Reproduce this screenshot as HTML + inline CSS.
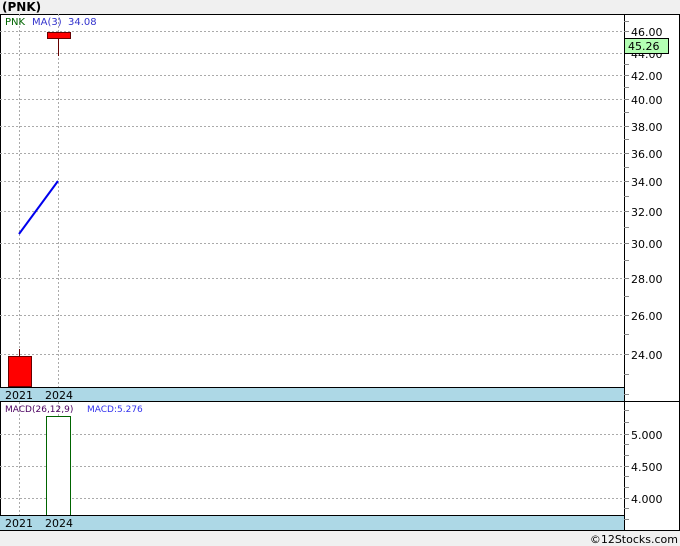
<!DOCTYPE html>
<html><head><meta charset="utf-8"><style>
html,body{margin:0;padding:0;background:#f0f0f0;}
svg{display:block;font-family:"DejaVu Sans",Verdana,sans-serif;}
</style></head><body>
<svg width="680" height="546" viewBox="0 0 680 546" xmlns="http://www.w3.org/2000/svg">
<rect x="0" y="0" width="680" height="546" fill="#f0f0f0"/>
<text x="2" y="11" font-size="12" font-weight="bold" fill="#000">(PNK)</text>
<rect x="0" y="14" width="680" height="516" fill="#fff"/>
<line x1="0" y1="14.5" x2="680" y2="14.5" stroke="#000"/>
<line x1="0.5" y1="14" x2="0.5" y2="530" stroke="#000"/>
<line x1="679.5" y1="14" x2="679.5" y2="530" stroke="#000"/>
<g stroke="#aaa" stroke-dasharray="2,2" stroke-width="1">
<line x1="0" y1="31.5" x2="624" y2="31.5"/>
<line x1="0" y1="53.5" x2="624" y2="53.5"/>
<line x1="0" y1="75.5" x2="624" y2="75.5"/>
<line x1="0" y1="99.5" x2="624" y2="99.5"/>
<line x1="0" y1="126.5" x2="624" y2="126.5"/>
<line x1="0" y1="153.5" x2="624" y2="153.5"/>
<line x1="0" y1="181.5" x2="624" y2="181.5"/>
<line x1="0" y1="211.5" x2="624" y2="211.5"/>
<line x1="0" y1="243.5" x2="624" y2="243.5"/>
<line x1="0" y1="278.5" x2="624" y2="278.5"/>
<line x1="0" y1="315.5" x2="624" y2="315.5"/>
<line x1="0" y1="354.5" x2="624" y2="354.5"/>
<line x1="19.5" y1="14" x2="19.5" y2="387"/>
<line x1="58.5" y1="14" x2="58.5" y2="387"/>
<line x1="0" y1="434.5" x2="624" y2="434.5"/>
<line x1="0" y1="466.5" x2="624" y2="466.5"/>
<line x1="0" y1="498.5" x2="624" y2="498.5"/>
<line x1="19.5" y1="402" x2="19.5" y2="515"/>
<line x1="58.5" y1="402" x2="58.5" y2="515"/>
</g>
<text x="5" y="25" font-size="10" fill="#006400">PNK</text>
<text x="32" y="25" font-size="10" fill="#3333cc">MA(3)</text>
<text x="68" y="25" font-size="10" fill="#3333cc">34.08</text>
<line x1="19.5" y1="349" x2="19.5" y2="357" stroke="#600"/>
<rect x="8.5" y="356.5" width="23" height="30" fill="#f00" stroke="#600"/>
<line x1="58.5" y1="38" x2="58.5" y2="56" stroke="#600"/>
<rect x="47.5" y="32.5" width="23" height="6" fill="#f00" stroke="#600"/>
<line x1="19" y1="234" x2="58" y2="181" stroke="#0000ee" stroke-width="2"/>
<rect x="0" y="387" width="624" height="14" fill="#add8e6"/>
<line x1="0" y1="387.5" x2="624" y2="387.5" stroke="#000"/>
<line x1="0" y1="401.5" x2="680" y2="401.5" stroke="#000"/>
<text x="5" y="399" font-size="11" fill="#000">2021</text>
<text x="45" y="399" font-size="11" fill="#000">2024</text>
<line x1="624.5" y1="14" x2="624.5" y2="530" stroke="#000"/>
<g stroke="#888">
<line x1="624" y1="31.5" x2="629" y2="31.5"/><line x1="624" y1="53.5" x2="629" y2="53.5"/><line x1="624" y1="75.5" x2="629" y2="75.5"/><line x1="624" y1="99.5" x2="629" y2="99.5"/><line x1="624" y1="126.5" x2="629" y2="126.5"/><line x1="624" y1="153.5" x2="629" y2="153.5"/><line x1="624" y1="181.5" x2="629" y2="181.5"/><line x1="624" y1="211.5" x2="629" y2="211.5"/><line x1="624" y1="243.5" x2="629" y2="243.5"/><line x1="624" y1="278.5" x2="629" y2="278.5"/><line x1="624" y1="315.5" x2="629" y2="315.5"/><line x1="624" y1="354.5" x2="629" y2="354.5"/>
<line x1="624" y1="21.5" x2="629" y2="21.5"/><line x1="624" y1="42.5" x2="629" y2="42.5"/><line x1="624" y1="64.5" x2="629" y2="64.5"/><line x1="624" y1="87.5" x2="629" y2="87.5"/><line x1="624" y1="112.5" x2="629" y2="112.5"/><line x1="624" y1="139.5" x2="629" y2="139.5"/><line x1="624" y1="167.5" x2="629" y2="167.5"/><line x1="624" y1="196.5" x2="629" y2="196.5"/><line x1="624" y1="227.5" x2="629" y2="227.5"/><line x1="624" y1="260.5" x2="629" y2="260.5"/><line x1="624" y1="296.5" x2="629" y2="296.5"/><line x1="624" y1="334.5" x2="629" y2="334.5"/><line x1="624" y1="374.5" x2="629" y2="374.5"/><line x1="624" y1="394.5" x2="629" y2="394.5"/>
<line x1="624" y1="410.5" x2="629" y2="410.5"/><line x1="624" y1="422.5" x2="629" y2="422.5"/><line x1="624" y1="434.5" x2="629" y2="434.5"/><line x1="624" y1="444.5" x2="629" y2="444.5"/><line x1="624" y1="455.5" x2="629" y2="455.5"/><line x1="624" y1="466.5" x2="629" y2="466.5"/><line x1="624" y1="476.5" x2="629" y2="476.5"/><line x1="624" y1="487.5" x2="629" y2="487.5"/><line x1="624" y1="498.5" x2="629" y2="498.5"/><line x1="624" y1="508.5" x2="629" y2="508.5"/><line x1="624" y1="519.5" x2="629" y2="519.5"/>
</g>
<g font-size="11" fill="#000">
<text x="631" y="36">46.00</text>
<text x="631" y="58">44.00</text>
<text x="631" y="80">42.00</text>
<text x="631" y="104">40.00</text>
<text x="631" y="131">38.00</text>
<text x="631" y="158">36.00</text>
<text x="631" y="186">34.00</text>
<text x="631" y="216">32.00</text>
<text x="631" y="248">30.00</text>
<text x="631" y="283">28.00</text>
<text x="631" y="320">26.00</text>
<text x="631" y="359">24.00</text>
<text x="631" y="439">5.000</text>
<text x="631" y="471">4.500</text>
<text x="631" y="503">4.000</text>
</g>
<rect x="624.5" y="38.5" width="44" height="15" fill="#b3ffb3" stroke="#000"/>
<text x="628" y="50" font-size="11" fill="#000">45.26</text>
<text x="5" y="412" font-size="9" fill="#4b0060">MACD(26,12,9)</text>
<text x="87" y="412" font-size="9" fill="#3333ee">MACD:5.276</text>
<rect x="46.5" y="416.5" width="24" height="99" fill="#fff" stroke="#006400"/>
<rect x="0" y="515" width="624" height="15" fill="#add8e6"/>
<line x1="0" y1="515.5" x2="624" y2="515.5" stroke="#000"/>
<line x1="0" y1="530.5" x2="680" y2="530.5" stroke="#000"/>
<text x="5" y="527" font-size="11" fill="#000">2021</text>
<text x="45" y="527" font-size="11" fill="#000">2024</text>
<rect x="0" y="531" width="680" height="15" fill="#f0f0f0"/>
<text x="678" y="543" font-size="11" fill="#000" text-anchor="end">©12Stocks.com</text>
</svg>
</body></html>
